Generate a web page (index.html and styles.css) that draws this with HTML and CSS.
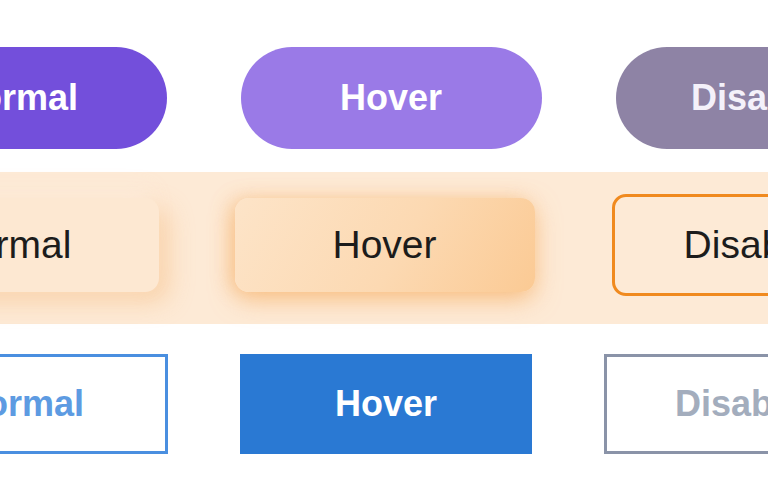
FILE: index.html
```html
<!DOCTYPE html>
<html lang="en">
<head>
    <meta charset="UTF-8">
    <meta name="viewport" content="width=device-width, initial-scale=1.0">
    <title>Button States</title>
    <link rel="stylesheet" href="styles.css">
</head>
<body>
    <div class="row row-pill">
        <button class="pill">Normal</button>
        <button class="pill hover">Hover</button>
        <button class="pill disabled">Disabled</button>
    </div>

    <div class="band">
        <div class="row row-soft">
            <button class="soft">Normal</button>
            <button class="soft hover">Hover</button>
            <button class="soft disabled">Disabled</button>
        </div>
    </div>

    <div class="row row-line">
        <button class="line">Normal</button>
        <button class="line hover">Hover</button>
        <button class="line disabled">Disabled</button>
    </div>
</body>
</html>
```

FILE: styles.css
```css
body {
    margin: 0;
    padding: 47px 0 0;
    background: #fff;
    font-family: "Liberation Sans", Arial, sans-serif;
    overflow: hidden;
}
button {
    flex: none;
    font-family: inherit;
    border: none;
    cursor: pointer;
    padding: 0;
}
.row {
    display: flex;
    justify-content: center;
    width: 768px;
    box-sizing: border-box;
}

/* purple pills */
.row-pill {
    gap: 74px;
    padding-left: 14px;
}
.pill {
    width: 301px;
    height: 102px;
    border-radius: 51px;
    background: #734fdb;
    color: #fff;
    font-size: 36px;
    font-weight: bold;
}
.pill.hover {
    background: #9a7ae7;
}
.pill.disabled {
    background: #8e83a5;
    color: #f4f1fa;
}

/* soft orange */
.band {
    margin-top: 23px;
    height: 152px;
    background: #fdead6;
    display: flex;
    align-items: center;
}
.row-soft {
    gap: 76px;
    align-items: center;
    margin-top: -6px;
    padding-right: 2px;
}
.soft {
    width: 300px;
    height: 94px;
    border-radius: 14px;
    background: #fde8d2;
    color: #1c1c1c;
    font-size: 39px;
    box-shadow: -8px -8px 18px rgba(255, 240, 225, 0.5), 10px 10px 24px rgba(246, 185, 120, 0.45);
}
.soft.hover {
    background: linear-gradient(120deg, #fde4c8 0%, #fcd9b2 55%, #fbca94 100%);
    box-shadow: 0 8px 24px rgba(246, 170, 90, 0.55), -6px 0 18px rgba(246, 175, 100, 0.35);
}
.soft.disabled {
    width: 296px;
    height: 102px;
    margin-left: 1px;
    background: #fdead6;
    border: 3px solid #f08a1f;
    box-shadow: none;
}

/* outlined blue */
.row-line {
    margin-top: 30px;
    gap: 72px;
    padding-left: 4px;
}
.line {
    width: 292px;
    height: 100px;
    background: #fff;
    border: 3px solid #4a8fe0;
    color: #5d9be2;
    font-size: 36px;
    font-weight: bold;
}
.line.hover {
    background: #2a79d3;
    border-color: #2a79d3;
    color: #fff;
}
.line.disabled {
    border-color: #8a93a8;
    color: #a3adbd;
}
```
